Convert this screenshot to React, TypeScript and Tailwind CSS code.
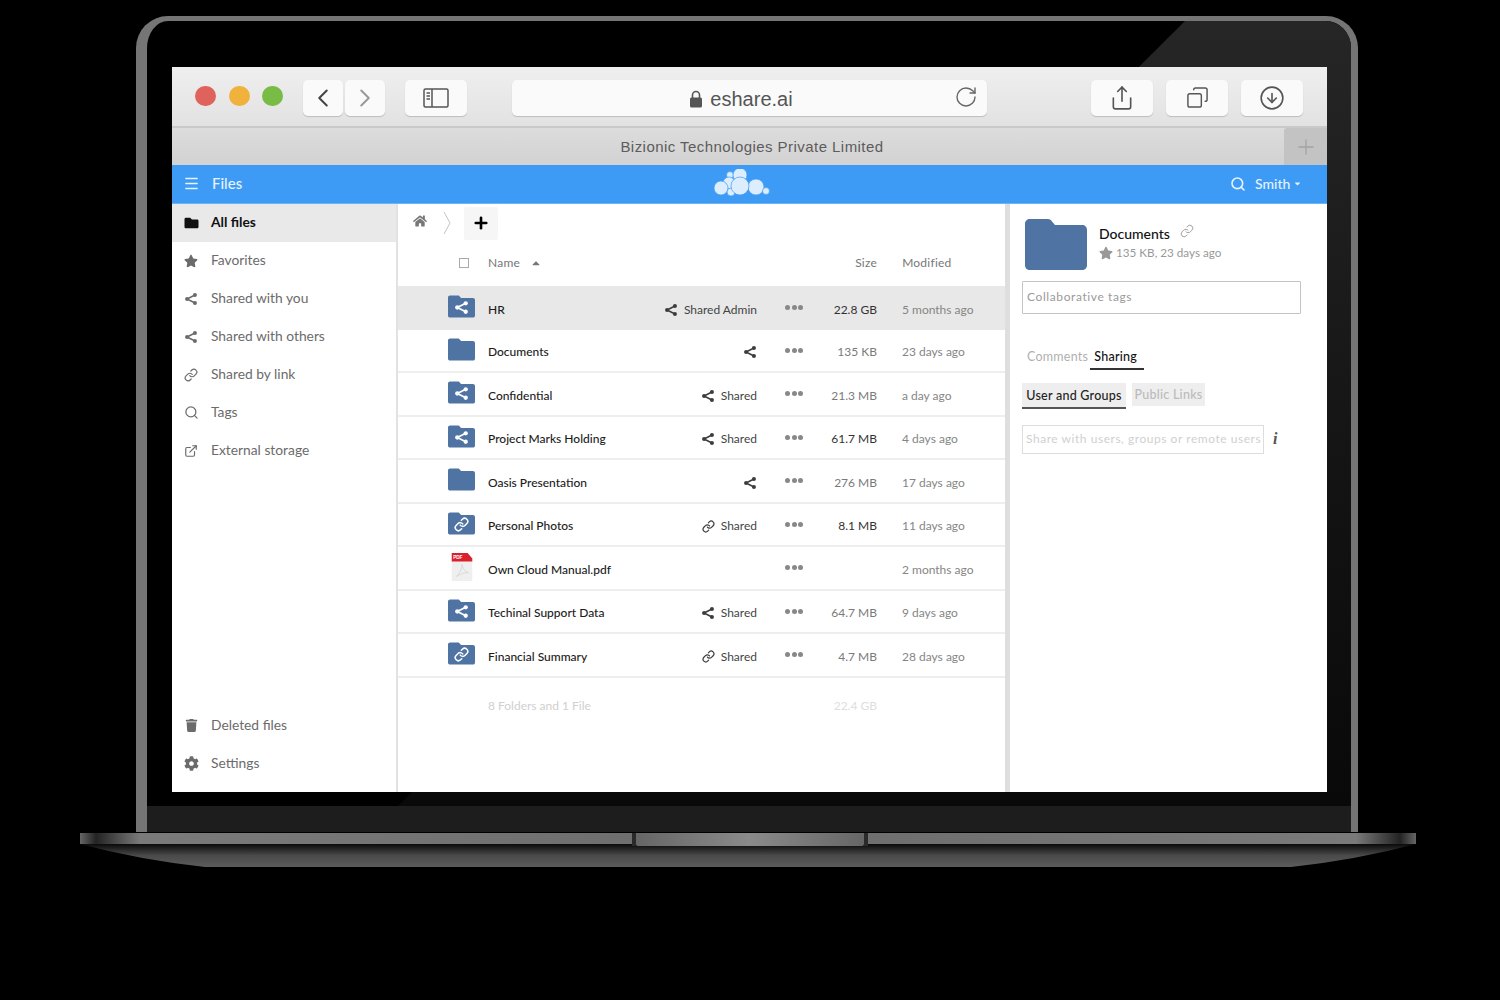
import type { ReactNode } from "react";
import {
  ChevronLeft,
  ChevronRight,
  CircleArrowDown,
  Copy,
  ExternalLink,
  Link,
  Menu,
  Plus,
  RotateCw,
  Search,
  Share,
} from "lucide-react";
import { FaCaretDown, FaCaretUp, FaCog, FaFolder, FaHome, FaStar, FaTrash } from "react-icons/fa";

type FileRow = {
  name: string;
  badge: "share" | "link" | "none" | "pdf";
  shared?: string;
  shareIcon?: "share" | "link";
  size?: string;
  sizeDark?: boolean;
  modified: string;
};

const files: FileRow[] = [
  { name: "HR", badge: "share", shared: "Shared Admin", shareIcon: "share", size: "22.8 GB", sizeDark: true, modified: "5 months ago" },
  { name: "Documents", badge: "none", shareIcon: "share", size: "135 KB", modified: "23 days ago" },
  { name: "Confidential", badge: "share", shared: "Shared", shareIcon: "share", size: "21.3 MB", modified: "a day ago" },
  { name: "Project Marks Holding", badge: "share", shared: "Shared", shareIcon: "share", size: "61.7 MB", sizeDark: true, modified: "4 days ago" },
  { name: "Oasis Presentation", badge: "none", shareIcon: "share", size: "276 MB", modified: "17 days ago" },
  { name: "Personal Photos", badge: "link", shared: "Shared", shareIcon: "link", size: "8.1 MB", sizeDark: true, modified: "11 days ago" },
  { name: "Own Cloud Manual.pdf", badge: "pdf", modified: "2 months ago" },
  { name: "Techinal Support Data", badge: "share", shared: "Shared", shareIcon: "share", size: "64.7 MB", modified: "9 days ago" },
  { name: "Financial Summary", badge: "link", shared: "Shared", shareIcon: "link", size: "4.7 MB", modified: "28 days ago" },
];

function ShareNodes({ className }: { className?: string }) {
  return (
    <svg viewBox="0 0 16 16" className={className} fill="currentColor" stroke="currentColor">
      <path d="M12.5 3.5 3.5 8l9 4.5" fill="none" strokeWidth="1.8" />
      <circle cx="3.5" cy="8" r="2.3" stroke="none" />
      <circle cx="12.5" cy="3.5" r="2.3" stroke="none" />
      <circle cx="12.5" cy="12.5" r="2.3" stroke="none" />
    </svg>
  );
}

function FolderShape({ className }: { className?: string }) {
  return (
    <svg viewBox="0 0 62 51" className={className}>
      <path
        d="M5 0h18c2 0 3 1 4 2.500L30 6h27c3 0 5 2 5 5v35c0 3-2 5-5 5H5c-3 0-5-2-5-5V5c0-3 2-5 5-5z"
        fill="#4f74a3"
      />
    </svg>
  );
}

function PdfIcon() {
  return (
    <svg viewBox="0 0 24 30" className="h-[28px] w-[24px]">
      <path d="M1 0h17l5 5v25H1z" fill="#efefef" />
      <path d="M1 0h17l5 6v3H1z" fill="#d9202c" />
      <text x="2.500" y="6.500" fontSize="5" fontWeight="700" fill="#fff" fontFamily="Liberation Sans, sans-serif">
        PDF
      </text>
      <path d="M6 25c4-3 6-8 6-13 1 5 3 8 7 9-4 0-8 1-13 4z" fill="none" stroke="#d0d0d0" strokeWidth="0.7" />
    </svg>
  );
}

function FileIcon({ badge }: { badge: FileRow["badge"] }) {
  if (badge === "pdf") {
    return (
      <div className="flex w-[27px] -translate-y-[3px] justify-center">
        <PdfIcon />
      </div>
    );
  }
  return (
    <div className="relative h-[25px] w-[27px] -translate-y-[3px]">
      <FolderShape className="h-full w-full" />
      {badge === "share" && <ShareNodes className="absolute left-[6px] top-[6px] h-[15px] w-[15px] text-white" />}
      {badge === "link" && <Link className="absolute left-[6px] top-[6px] h-[15px] w-[15px] text-white" strokeWidth={2.4} />}
    </div>
  );
}

function ToolButton({ width, children }: { width: string; children: ReactNode }) {
  return (
    <div className={`flex h-[36px] ${width} items-center justify-center rounded-[5px] bg-[#fafafa] shadow-[0_1px_1px_#bdbdbd]`}>
      {children}
    </div>
  );
}

function SideItem({ icon, label, active }: { icon: ReactNode; label: string; active?: boolean }) {
  return (
    <div className={`flex h-[38px] items-center pb-[1px] ${active ? "bg-[#e9e9e9] font-bold text-[#111]" : "text-[#6b6b6b]"}`}>
      <div className="flex w-[39px] justify-center pr-[1px]">{icon}</div>
      <span>{label}</span>
    </div>
  );
}

function Row({ file, index }: { file: FileRow; index: number }) {
  const highlighted = index === 0;
  return (
    <div
      className={`flex h-[43.5px] items-center pl-[50px] pt-[4px] text-[12px] ${
        highlighted ? "bg-[#e8e8e8]" : "border-b-2 border-[#eeeeee]"
      }`}
    >
      <FileIcon badge={file.badge} />
      <span className="ml-[13px] flex-1 font-medium text-[#1c1c1c]">{file.name}</span>
      <div className="flex items-center gap-[6px] text-[#444]">
        {file.shareIcon === "share" && <ShareNodes className="h-[14px] w-[14px] text-[#3c3c3c]" />}
        {file.shareIcon === "link" && <Link className="h-[13px] w-[13px] text-[#3c3c3c]" strokeWidth={2.2} />}
        {file.shared && <span>{file.shared}</span>}
      </div>
      <div className="ml-[28px] mb-[4px] flex w-[18px] justify-between">
        <span className="h-[5px] w-[5px] rounded-full bg-[#888]" />
        <span className="h-[5px] w-[5px] rounded-full bg-[#888]" />
        <span className="h-[5px] w-[5px] rounded-full bg-[#888]" />
      </div>
      <span className={`w-[74px] text-right ${file.sizeDark ? "text-[#333]" : "text-[#7a7a7a]"}`}>{file.size}</span>
      <span className="ml-[25px] w-[103px] text-[#858585]">{file.modified}</span>
    </div>
  );
}

function CloudLogo() {
  return (
    <svg viewBox="0 0 56 30" className="h-[30px] w-[56px]" fill="#dcedfd" stroke="#3d9bf5" strokeWidth="0.7">
      <circle cx="16" cy="6" r="3.500" />
      <circle cx="26" cy="6" r="7" />
      <circle cx="15" cy="14" r="6" />
      <circle cx="7" cy="19" r="7" />
      <circle cx="17" cy="23" r="4" />
      <circle cx="42" cy="18" r="8" />
      <circle cx="52" cy="22" r="3.500" />
      <circle cx="26" cy="17" r="9" />
    </svg>
  );
}

export default function App() {
  return (
    <div className="h-[1000px] w-[1500px] overflow-hidden bg-black pt-[16px] font-['Lato',sans-serif]">
      {/* laptop lid */}
      <div className="relative ml-[136px] h-[816px] w-[1222px] rounded-t-[32px] border-t-[5px] border-r-[7px] border-l-[11px] border-[#757575] bg-black">
        <svg viewBox="0 0 1204 811" className="absolute left-0 top-0 h-[811px] w-[1204px] rounded-tr-[26px]">
          <defs>
            <linearGradient id="gloss" x1="0" y1="0" x2="0" y2="1">
              <stop offset="0" stopColor="#262626" />
              <stop offset="0.6" stopColor="#121212" />
              <stop offset="1" stopColor="#080808" />
            </linearGradient>
          </defs>
          <polygon points="1038,0 1204,0 1204,811 225,811" fill="url(#gloss)" />
        </svg>

        <div className="h-[46px]" />

        {/* screen */}
        <div className="relative ml-[25px] flex h-[725px] w-[1155px] flex-col bg-white">
          {/* browser toolbar */}
          <div className="flex h-[61px] items-center border-b-2 border-[#c9c9c9] bg-gradient-to-b from-[#efefef] to-[#e2e2e2] pl-[23px] pt-[2px]">
            <div className="mb-[4px] flex gap-[12.5px]">
              <span className="h-[20px] w-[21px] rounded-full bg-[#e0625c]" />
              <span className="h-[20px] w-[21px] rounded-full bg-[#f0b23c]" />
              <span className="h-[20px] w-[21px] rounded-full bg-[#78bb45]" />
            </div>
            <div className="ml-[20px] flex gap-[2px]">
              <ToolButton width="w-[40px]">
                <ChevronLeft className="h-[30px] w-[30px] text-[#444]" strokeWidth={1.6} />
              </ToolButton>
              <ToolButton width="w-[40px]">
                <ChevronRight className="h-[30px] w-[30px] text-[#999]" strokeWidth={1.6} />
              </ToolButton>
            </div>
            <div className="ml-[20px]">
              <ToolButton width="w-[62px]">
                <svg viewBox="0 0 26 20" className="h-[20px] w-[26px]" fill="none" stroke="#555" strokeWidth="1.5">
                  <rect x="1" y="1" width="24" height="18" rx="1.500" />
                  <path d="M9 1v18M3.500 5H7M3.500 8H7M3.500 11H7" />
                </svg>
              </ToolButton>
            </div>
            <div className="relative ml-[45px] flex h-[36px] w-[475px] items-center justify-center rounded-[5px] bg-[#fafafa] pr-[17px] pt-[2px] font-['Liberation_Sans',sans-serif] text-[20px] text-[#555] shadow-[0_1px_1px_#bdbdbd]">
              <svg viewBox="0 0 14 18" className="mr-[7px] h-[18px] w-[14px]">
                <path d="M3.500 8V5a3.500 3.500 0 0 1 7 0v3" fill="none" stroke="#555" strokeWidth="1.6" />
                <rect x="1" y="7.500" width="12" height="10" rx="1.500" fill="#555" />
              </svg>
              <span>eshare.ai</span>
              <RotateCw className="absolute right-[9px] top-[5px] h-[24px] w-[24px] text-[#666]" strokeWidth={1.4} />
            </div>
            <div className="ml-[104px] flex gap-[13px]">
              <ToolButton width="w-[62px]">
                <Share className="h-[26px] w-[26px] text-[#555]" strokeWidth={1.5} />
              </ToolButton>
              <ToolButton width="w-[62px]">
                <Copy className="h-[23px] w-[23px] -scale-x-100 text-[#555]" strokeWidth={1.5} />
              </ToolButton>
              <ToolButton width="w-[62px]">
                <CircleArrowDown className="h-[26px] w-[26px] text-[#555]" strokeWidth={1.5} />
              </ToolButton>
            </div>
          </div>

          {/* tab strip */}
          <div className="flex h-[37px] bg-gradient-to-b from-[#dcdcdc] to-[#d2d2d2]">
            <div className="flex flex-1 items-center justify-center pl-[48px] pt-[2px] font-['Liberation_Sans',sans-serif] text-[15px] font-medium tracking-[0.03em] text-[#5c5c5c]">
              Bizionic Technologies Private Limited
            </div>
            <div className="flex w-[43px] items-center justify-center rounded-tl-[3px] bg-[#c3c3c3]">
              <Plus className="h-[24px] w-[24px] text-[#a3a3a3]" strokeWidth={1.3} />
            </div>
          </div>

          {/* owncloud header */}
          <div className="flex h-[39px] items-center border-b border-[#6db4f7] bg-[#3d9bf5] pb-[1px] text-[14px] font-medium text-[#e6f2fe]">
            <Menu className="ml-[11px] h-[17px] w-[17px]" strokeWidth={2} />
            <span className="ml-[12px] w-[502px] text-[15px]">Files</span>
            <CloudLogo />
            <Search className="ml-[460px] h-[16px] w-[16px]" strokeWidth={2.4} />
            <span className="ml-[9px]">Smith</span>
            <FaCaretDown className="ml-[3px] h-[9px] w-[9px]" />
          </div>

          {/* content */}
          <div className="flex min-h-0 flex-1">
            {/* sidebar */}
            <div className="flex w-[226px] flex-col justify-between border-r-2 border-[#e2e2e2] pb-[9px] text-[13.800px]">
              <div>
                <SideItem active label="All files" icon={<FaFolder className="h-[14px] w-[15px] text-[#111]" />} />
                <SideItem label="Favorites" icon={<FaStar className="h-[14px] w-[14px]" />} />
                <SideItem label="Shared with you" icon={<ShareNodes className="h-[14px] w-[14px]" />} />
                <SideItem label="Shared with others" icon={<ShareNodes className="h-[14px] w-[14px]" />} />
                <SideItem label="Shared by link" icon={<Link className="h-[14px] w-[14px]" strokeWidth={2} />} />
                <SideItem label="Tags" icon={<Search className="h-[15px] w-[15px]" strokeWidth={2} />} />
                <SideItem label="External storage" icon={<ExternalLink className="h-[14px] w-[14px]" strokeWidth={2} />} />
              </div>
              <div>
                <SideItem label="Deleted files" icon={<FaTrash className="h-[13px] w-[13px]" />} />
                <SideItem label="Settings" icon={<FaCog className="h-[15px] w-[15px]" />} />
              </div>
            </div>

            {/* file list */}
            <div className="w-[612px] border-r-[5px] border-[#dedede]">
              <div className="flex h-[38px] items-center pl-[15px]">
                <FaHome className="mb-[4px] h-[14px] w-[14px] text-[#777]" />
                <svg viewBox="0 0 8 24" className="ml-[16px] h-[24px] w-[8px]" fill="none" stroke="#c4c4c4" strokeWidth="1">
                  <path d="M1 1l6 11-6 11" />
                </svg>
                <div className="ml-[13px] flex h-[33px] w-[34px] items-center justify-center rounded-[2px] bg-[#f6f6f6]">
                  <Plus className="h-[18px] w-[18px] text-black" strokeWidth={3.5} />
                </div>
              </div>
              <div className="flex h-[44px] items-center pb-[2px] text-[12px] tracking-[0.02em] text-[#777]">
                <span className="ml-[61px] h-[10px] w-[10px] border border-[#aaa]" />
                <span className="ml-[19px]">Name</span>
                <FaCaretUp className="ml-[10px] h-[12px] w-[12px] text-[#777]" />
                <span className="ml-[288px] w-[47px] text-right">Size</span>
                <span className="ml-[25px]">Modified</span>
              </div>
              {files.map((file, i) => (
                <Row key={file.name} file={file} index={i} />
              ))}
              <div className="flex h-[56px] items-center text-[12px] text-[#cfcfcf]">
                <span className="ml-[90px] w-[315px]">8 Folders and 1 File</span>
                <span className="w-[74px] text-right text-[#dedede]">22.4 GB</span>
              </div>
            </div>

            {/* details */}
            <div className="flex-1 pl-[12px] pt-[15px]">
              <div className="flex pl-[3px]">
                <FolderShape className="h-[51px] w-[62px]" />
                <div className="ml-[12px] pt-[4px]">
                  <div className="flex items-center text-[14px] font-medium text-[#111]">
                    Documents
                    <Link className="ml-[10px] mb-[5px] h-[14px] w-[14px] text-[#999]" strokeWidth={1.6} />
                  </div>
                  <div className="flex items-center text-[11.700px] text-[#999]">
                    <FaStar className="mr-[3px] h-[14px] w-[14px] text-[#999]" />
                    135 KB, 23 days ago
                  </div>
                </div>
              </div>
              <div className="mt-[11px] flex h-[33px] w-[279px] items-center rounded-[1px] border border-[#c4c4c4] pb-[2px] pl-[4px] text-[12px] tracking-[0.05em] text-[#9a9a9a]">
                Collaborative tags
              </div>
              <div className="mt-[31px] flex items-start text-[12.500px] tracking-[0.02em]">
                <span className="ml-[5px] mt-[3px] text-[#b0b0b0]">Comments</span>
                <span className="ml-[2px] w-[54px] border-b-2 border-[#333] pb-[1px] pl-[4px] pt-[3px] font-medium text-[#111]">Sharing</span>
              </div>
              <div className="mt-[13px] flex items-start text-[12.500px] tracking-[0.02em]">
                <span className="flex h-[26px] w-[104px] items-center justify-center border-b-2 border-[#555] bg-[#eeeeee] pt-[4px] font-medium text-[#222]">
                  User and Groups
                </span>
                <span className="ml-[6px] flex h-[23px] w-[73px] items-center justify-center bg-[#eeeeee] pt-[3px] font-medium text-[#bbbbbb]">
                  Public Links
                </span>
              </div>
              <div className="mt-[16px] flex items-center">
                <div className="flex h-[29px] w-[242px] items-center whitespace-nowrap border border-[#dddddd] pl-[3px] text-[12px] tracking-[0.045em] text-[#d0d0d0]">
                  Share with users, groups or remote users
                </div>
                <span className="ml-[9px] font-['Liberation_Serif',serif] text-[16px] font-bold italic text-[#555]">i</span>
              </div>
            </div>
          </div>
        </div>

        <div className="relative h-[14px]" />
        <div className="relative h-[26px] bg-[#1d1d1d]" />
      </div>

      {/* laptop base */}
      <svg viewBox="0 0 1336 40" className="ml-[80px] block h-[40px] w-[1336px]">
        <defs>
          <linearGradient id="rim" x1="0" y1="0" x2="1" y2="0">
            <stop offset="0" stopColor="#666666" />
            <stop offset="0.012" stopColor="#232323" />
            <stop offset="0.045" stopColor="#7a7a7a" />
            <stop offset="0.5" stopColor="#6c6c6c" />
            <stop offset="0.955" stopColor="#7a7a7a" />
            <stop offset="0.988" stopColor="#232323" />
            <stop offset="1" stopColor="#666666" />
          </linearGradient>
          <linearGradient id="under" x1="0" y1="0" x2="0" y2="1">
            <stop offset="0" stopColor="#0a0a0a" />
            <stop offset="0.5" stopColor="#4a4a4a" />
            <stop offset="1" stopColor="#5c5c5c" />
          </linearGradient>
          <linearGradient id="notch" x1="0" y1="0" x2="1" y2="0">
            <stop offset="0" stopColor="#666666" />
            <stop offset="0.5" stopColor="#8a8a8a" />
            <stop offset="1" stopColor="#666666" />
          </linearGradient>
        </defs>
        <path d="M0 12Q60 28 125 35H1211Q1276 28 1336 12Z" fill="url(#under)" />
        <rect x="0" y="1" width="1336" height="11" fill="url(#rim)" />
        <rect x="552" y="1" width="4" height="13" fill="#2a2a2a" />
        <rect x="784" y="1" width="4" height="13" fill="#2a2a2a" />
        <rect x="556" y="1" width="228" height="13" rx="2" fill="url(#notch)" />
      </svg>
    </div>
  );
}
